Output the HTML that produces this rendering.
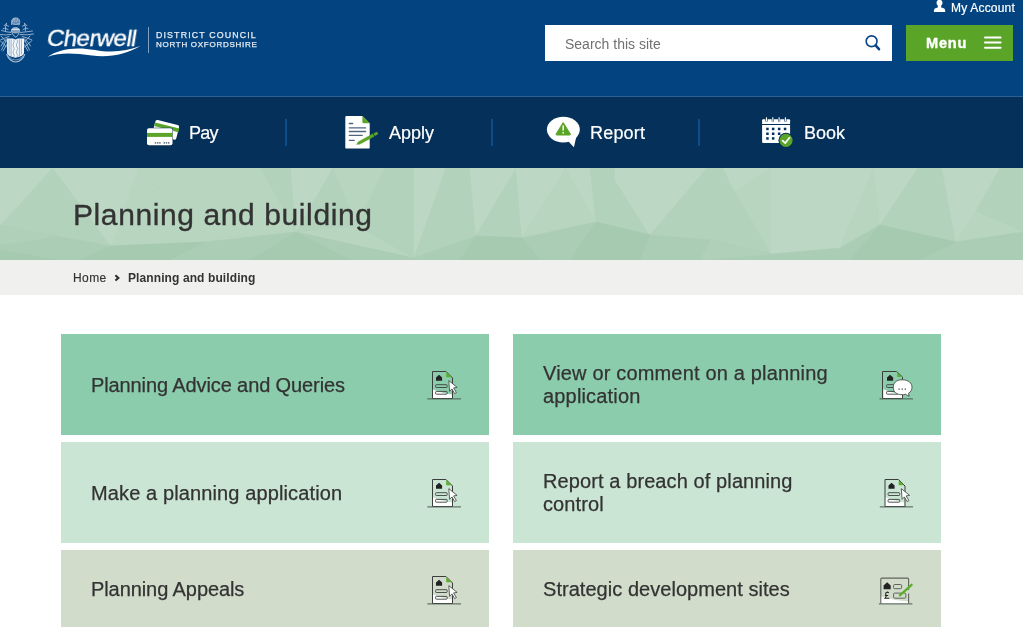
<!DOCTYPE html>
<html><head><meta charset="utf-8">
<style>
*{box-sizing:border-box;margin:0;padding:0}
html,body{width:1023px;height:635px;overflow:hidden;background:#fff;font-family:"Liberation Sans",sans-serif}
.a,.ct,.nt{will-change:transform}
.a{position:absolute;line-height:1;white-space:nowrap}
#hdr{position:absolute;left:0;top:0;width:1023px;height:97px;background:#03437f}
#hline{position:absolute;left:0;top:96px;width:1023px;height:1px;background:#2c5f92}
#nav{position:absolute;left:0;top:97px;width:1023px;height:71px;background:#04305a}
#hero{position:absolute;left:0;top:168px;width:1023px;height:92px;background:#b7d5bf;overflow:hidden}
#crumb{position:absolute;left:0;top:260px;width:1023px;height:35px;background:#f0f1ef}
.card{position:absolute;width:428px}
.c1{background:#8bccac}
.c2{background:#cbe5d5}
.c3{background:#d2dccb}
.ct{position:absolute;font-size:20px;line-height:23px;color:#333;white-space:nowrap;-webkit-text-stroke:0.25px #333}
.sep{position:absolute;top:119px;width:2px;height:27px;background:#0c4e8c}
.nt{position:absolute;font-size:18px;line-height:1;color:#fff;white-space:nowrap;-webkit-text-stroke:0.2px #fff}
</style></head><body>
<div id="hdr"></div>
<div id="hline"></div>
<div id="nav"></div>
<div id="hero"><svg style="position:absolute;left:0;top:0" width="1023" height="92" viewBox="0 0 1023 92"><polygon points="0,0 53,0 0,58" fill="#bcd8c4" stroke="#bcd8c4" stroke-width="0.5"/><polygon points="53,0 0,58 111,78" fill="#b2d2bb" stroke="#b2d2bb" stroke-width="0.5"/><polygon points="53,0 138,0 111,78" fill="#bcd8c4" stroke="#bcd8c4" stroke-width="0.5"/><polygon points="138,0 205,0 148,25" fill="#b7d5bf" stroke="#b7d5bf" stroke-width="0.5"/><polygon points="148,25 205,0 205,71 111,78" fill="#b7d5bf" stroke="#b7d5bf" stroke-width="0.5"/><polygon points="205,0 261,0 296,64 205,71" fill="#b7d5bf" stroke="#b7d5bf" stroke-width="0.5"/><polygon points="261,0 291,0 296,64" fill="#b2d2bb" stroke="#b2d2bb" stroke-width="0.5"/><polygon points="291,0 333,0 296,64" fill="#bcd8c4" stroke="#bcd8c4" stroke-width="0.5"/><polygon points="333,0 357,58 296,64" fill="#b2d2bb" stroke="#b2d2bb" stroke-width="0.5"/><polygon points="333,0 385,0 357,58" fill="#b7d5bf" stroke="#b7d5bf" stroke-width="0.5"/><polygon points="385,0 414,0 414,90 357,58" fill="#b2d2bb" stroke="#b2d2bb" stroke-width="0.5"/><polygon points="414,0 446,0 414,90" fill="#bcd8c4" stroke="#bcd8c4" stroke-width="0.5"/><polygon points="446,0 470,0 476,68 414,90" fill="#b2d2bb" stroke="#b2d2bb" stroke-width="0.5"/><polygon points="470,0 516,0 476,68" fill="#bcd8c4" stroke="#bcd8c4" stroke-width="0.5"/><polygon points="516,0 522,70 476,68" fill="#b2d2bb" stroke="#b2d2bb" stroke-width="0.5"/><polygon points="516,0 566,0 522,70" fill="#bcd8c4" stroke="#bcd8c4" stroke-width="0.5"/><polygon points="566,0 596,54 522,70" fill="#b7d5bf" stroke="#b7d5bf" stroke-width="0.5"/><polygon points="566,0 590,0 596,54" fill="#bcd8c4" stroke="#bcd8c4" stroke-width="0.5"/><polygon points="590,0 615,0 615,12 650,67 596,54" fill="#b2d2bb" stroke="#b2d2bb" stroke-width="0.5"/><polygon points="615,0 707,0 650,67 615,12" fill="#bcd8c4" stroke="#bcd8c4" stroke-width="0.5"/><polygon points="707,0 723,0 771,86 650,67" fill="#b2d2bb" stroke="#b2d2bb" stroke-width="0.5"/><polygon points="723,0 771,0 735,24" fill="#bcd8c4" stroke="#bcd8c4" stroke-width="0.5"/><polygon points="735,24 771,0 771,86" fill="#b7d5bf" stroke="#b7d5bf" stroke-width="0.5"/><polygon points="771,0 874,0 840,80 771,86" fill="#bcd8c4" stroke="#bcd8c4" stroke-width="0.5"/><polygon points="874,0 880,57 840,80" fill="#b7d5bf" stroke="#b7d5bf" stroke-width="0.5"/><polygon points="874,0 918,0 880,57" fill="#bcd8c4" stroke="#bcd8c4" stroke-width="0.5"/><polygon points="918,0 942,0 956,74 880,57" fill="#b2d2bb" stroke="#b2d2bb" stroke-width="0.5"/><polygon points="942,0 1000,0 976,43 956,74" fill="#bcd8c4" stroke="#bcd8c4" stroke-width="0.5"/><polygon points="1000,0 1023,0 1023,64 976,43" fill="#b2d2bb" stroke="#b2d2bb" stroke-width="0.5"/><polygon points="976,43 1023,64 956,74" fill="#b7d5bf" stroke="#b7d5bf" stroke-width="0.5"/><polygon points="0,58 111,78 205,74 296,64 414,90 476,68 522,70 596,54 650,67 711,72 771,86 840,80 880,57 956,74 1023,64 1023,92 0,92" fill="#accdb5" stroke="#accdb5" stroke-width="0.5"/><polygon points="0,58 60,68 0,77" fill="#b0d0b9" stroke="#b0d0b9" stroke-width="0.5"/><polygon points="111,78 205,74 170,92 80,92" fill="#a6cab0" stroke="#a6cab0" stroke-width="0.5"/><polygon points="296,64 250,92 350,92" fill="#a6cab0" stroke="#a6cab0" stroke-width="0.5"/><polygon points="476,68 522,70 540,92 460,92" fill="#a6cab0" stroke="#a6cab0" stroke-width="0.5"/><polygon points="596,54 650,67 640,92 570,92" fill="#a6cab0" stroke="#a6cab0" stroke-width="0.5"/><polygon points="880,57 956,74 920,92 850,92" fill="#a6cab0" stroke="#a6cab0" stroke-width="0.5"/><polygon points="711,72 771,86 700,92" fill="#b0d0b9" stroke="#b0d0b9" stroke-width="0.5"/><polygon points="0,82 60,92 0,92" fill="#a6cab0" stroke="#a6cab0" stroke-width="0.5"/></svg></div>
<div id="crumb"></div>

<!-- logo -->
<svg style="position:absolute;left:0;top:0" width="150" height="70" viewBox="0 0 150 70">
 <g fill="none" stroke="#b4c7dd" stroke-width="0.9" stroke-linecap="round" opacity="0.9">
  <!-- crest figure -->
  <path d="M11.5,24.5 Q11,20 13,18.5 Q15.5,17.3 18,18.3 Q20,19.5 19.8,22.5 L19,25" fill="#6f92bb"/>
  <path d="M12.5,22 L13.3,19 M14.6,21.5 L15,18.5 M16.8,21.5 L17.5,19 M13,24 Q15.5,25.5 18.5,23.8"/>
  <!-- helmet -->
  <path d="M11.3,31.5 Q11.5,27.5 15.5,27.5 Q19.7,27.5 19.7,31.5 Q18,33 15.5,33 Q13,33 11.3,31.5 Z" fill="#8eabcc"/>
  <path d="M12,29.3 H19" stroke="#f0f4f8" stroke-width="1.2"/>
  <path d="M12,33 Q13,36 15.5,37 M19,33 Q18,36 16,37.2" stroke="#c5d4e5"/>
  <!-- sprigs -->
  <path d="M5.5,31 Q5,27 6.5,23.3 M6.5,23.3 L4,25.8 M6.3,25.3 L8.6,26.2 M5.6,27.8 L3,28.8 M5.6,28.5 L8,29.5"/>
  <path d="M25.5,31 Q26,27 24.5,23.3 M24.5,23.3 L27,25.8 M24.7,25.3 L22.4,26.2 M25.4,27.8 L28,28.8 M25.4,28.5 L23,29.5"/>
  <!-- mantling left -->
  <path d="M11,32.5 Q6,32 1.5,30.5 M11,34.5 Q5,35.5 0.5,34.5 M9,36.5 Q4,38 0.5,40 M7,38.5 Q3,41 1,46 M1,36 L6.5,42 M0.5,41 L6.5,47 M6.5,40 L1.5,50 M6.8,44.5 L3,51"/>
  <!-- mantling right -->
  <path d="M20,32.5 Q26,32 32.5,31 M20,34.5 Q27,35.5 33.5,34 M22,36.5 Q28,38 32,40 M24,38.5 Q28,41 30.5,46 M30,36 L24.5,42 M31.5,41 L24.5,47 M24.5,40 L29.5,50 M24.2,44.5 L28,51"/>
  <!-- motto scroll -->
  <path d="M6.8,54.5 Q9.5,61.5 15.5,62 Q22,61.5 24.7,54.5" stroke-width="1.2"/>
  <path d="M8.5,56.5 Q15.5,64 22.8,56.5" stroke-width="0.7"/>
 </g>
 <path d="M7.1,38.6 H13 L15.4,39.6 L17.8,38.6 H24 V53 Q24,56 15.4,57.8 Q7.1,56 7.1,53 Z" fill="#f4f7fa"/>
 <g stroke="#7f9fc2" stroke-width="0.8" fill="none">
  <path d="M9.1,39.3 V54.5 M11.1,39.3 V56 M19.4,39.3 V56 M21.4,39.3 V54.5"/>
  <path d="M13.6,39.6 q1.3,1.8 0,3.6 q-1.3,1.8 0,3.6 q1.3,1.8 0,3.6 q-1.3,1.8 0,3.6 q1.1,1.4 0.2,3 M17,39.6 q1.3,1.8 0,3.6 q-1.3,1.8 0,3.6 q1.3,1.8 0,3.6 q-1.3,1.8 0,3.6 q1.1,1.4 0.2,3"/>
 </g>
 <path d="M47.8,56.8 C58,49.2 75,46.3 95,50 C112,53.3 127,51 140.3,46.1 C127,54 110,58 92,55.6 C75,53.3 60,52.2 47.8,56.8 Z" fill="#fff"/>
</svg>
<div class="a" style="left:46px;top:26px;font-size:24px;color:#fff;transform:skewX(-9deg) scaleY(0.95);transform-origin:0 20px;-webkit-text-stroke:0.35px #fff;letter-spacing:-0.55px">Cherwell</div>
<div style="position:absolute;left:148px;top:27px;width:1px;height:26px;background:#7f9fc0"></div>
<div class="a" style="left:156px;top:31.2px;font-size:8.8px;font-weight:400;letter-spacing:1.15px;color:#e6ecf3;-webkit-text-stroke:0.25px #e6ecf3">DISTRICT COUNCIL</div>
<div class="a" style="left:156px;top:40.8px;font-size:8px;font-weight:400;letter-spacing:0.72px;color:#e6ecf3;-webkit-text-stroke:0.25px #e6ecf3">NORTH OXFORDSHIRE</div>

<!-- my account -->
<svg style="position:absolute;left:932px;top:0" width="16" height="14" viewBox="0 0 16 14">
 <circle cx="7.5" cy="2.8" r="3" fill="#fff"/>
 <path d="M5.8,5 H9.2 V7.6 Q13.2,8.2 13.2,10.8 V11.9 H1.9 V10.8 Q1.9,8.2 5.8,7.6 Z" fill="#fff"/>
</svg>
<div class="a" style="left:951px;top:1.5px;font-size:12px;letter-spacing:0.2px;color:#fff;-webkit-text-stroke:0.2px #fff">My Account</div>

<!-- search -->
<div style="position:absolute;left:545px;top:25px;width:347px;height:36px;background:#fff"></div>
<div class="a" style="left:565px;top:37px;font-size:14px;color:#6f716e">Search this site</div>

<svg style="position:absolute;left:860px;top:30px" width="26" height="24" viewBox="0 0 26 24">
 <circle cx="11.6" cy="11.25" r="5.4" fill="none" stroke="#0a4587" stroke-width="1.6"/>
 <path d="M15.6,15.4 L19,19.2" stroke="#0a4587" stroke-width="2.6" stroke-linecap="round"/>
</svg>
<!-- menu -->
<div style="position:absolute;left:906px;top:25px;width:107px;height:36px;background:#5aa528"></div>
<div class="a" style="left:925.5px;top:35.6px;font-size:14.6px;font-weight:700;letter-spacing:0.75px;color:#fff;-webkit-text-stroke:0.35px #fff">Menu</div>

<svg style="position:absolute;left:980px;top:30px" width="26" height="24" viewBox="0 0 26 24">
 <path d="M5,7.4 H20.6 M5,12.5 H20.6 M5,17.7 H20.6" stroke="#fff" stroke-width="2" stroke-linecap="round"/>
</svg>
<!-- nav -->
<div class="nt" style="left:189px;top:124px;letter-spacing:-0.7px">Pay</div>
<div class="nt" style="left:388.5px;top:124px">Apply</div>
<div class="nt" style="left:589.5px;top:124px;letter-spacing:0.2px">Report</div>
<div class="nt" style="left:803.5px;top:124px">Book</div>
<!-- pay icon -->
<svg style="position:absolute;left:140px;top:112px" width="45" height="40" viewBox="140 112 45 40">
 <g transform="translate(155.8,119.5) rotate(14.4)">
  <rect x="0" y="0" width="24.5" height="15" rx="2" fill="#fff"/>
  <rect x="0" y="3" width="25" height="3.8" fill="#5aa528"/>
 </g>
 <rect x="146.5" y="127.8" width="26.5" height="18" rx="2.2" fill="#04305a"/>
 <rect x="147" y="128.3" width="25.5" height="17" rx="2" fill="#fff"/>
 <rect x="147" y="132.9" width="25.5" height="4" fill="#5aa528"/>
 <g fill="#6b7b8c">
  <rect x="154.8" y="142" width="1.4" height="1.7"/><rect x="157" y="142" width="1.4" height="1.7"/><rect x="159.2" y="142" width="1.4" height="1.7"/>
  <rect x="163.6" y="142" width="1.4" height="1.7"/><rect x="165.8" y="142" width="1.4" height="1.7"/><rect x="168" y="142" width="1.4" height="1.7"/>
 </g>
</svg>
<!-- apply icon -->
<svg style="position:absolute;left:340px;top:112px" width="42" height="40" viewBox="340 112 42 40">
 <path d="M346.5,115.9 H362.4 L369.7,123.3 V147.4 Q369.7,148.6 368.5,148.6 H346.5 Q345.3,148.6 345.3,147.4 V117.1 Q345.3,115.9 346.5,115.9 Z" fill="#fff"/>
 <path d="M362.4,115.9 L369.7,123.3 H363.6 Q362.4,123.3 362.4,122.1 Z" fill="#5aa528"/>
 <g stroke="#4f6580" stroke-width="1.3" stroke-linecap="round">
  <path d="M349.3,123.5 H352.7 M349.3,127.9 H365.6 M349.3,131.5 H365.6 M349.3,135.3 H362.2 M349.3,140.3 H354.3"/>
 </g>
 <path d="M356.4,144.4 L358.3,141.65 L372.8,133.8 L374.2,136.4 L359.75,144.29 Z" fill="#5aa528" stroke="#5aa528" stroke-width="0.3" stroke-linejoin="round"/>
 <path d="M373.5,133.4 L376.1,132 Q377.1,131.6 377.6,132.5 L377.9,133.2 Q378.1,134 377.5,134.6 L374.9,136 Z" fill="#5aa528"/>
</svg>
<!-- report icon -->
<svg style="position:absolute;left:543px;top:112px" width="42" height="40" viewBox="543 112 42 40">
 <ellipse cx="563.35" cy="129.6" rx="16.45" ry="12.9" fill="#fff"/>
 <path d="M567.5,140.5 L573.9,147.3 L576.5,136 Z" fill="#fff"/>
 <path d="M563.2,122.6 L570.2,133.8 Q570.8,135 569.5,135 H556.9 Q555.6,135 556.2,133.8 Z" fill="#5aa528" stroke="#5aa528" stroke-width="1" stroke-linejoin="round"/>
 <path d="M563.2,125.6 V130.6" stroke="#fff" stroke-width="1.5"/>
 <rect x="562.45" y="132" width="1.5" height="1.5" fill="#fff"/>
</svg>
<!-- book icon -->
<svg style="position:absolute;left:758px;top:112px" width="42" height="40" viewBox="758 112 42 40">
 <path d="M763.1,119.2 H789.1 Q790.1,119.2 790.1,120.2 V124 H762.1 V120.2 Q762.1,119.2 763.1,119.2 Z" fill="#fff"/>
 <path d="M762.1,124.9 H790.1 V141.9 Q790.1,142.9 789.1,142.9 H763.1 Q762.1,142.9 762.1,141.9 Z" fill="#fff"/>
 <g stroke="#04305a" stroke-width="2.2"><path d="M766.5,117 V121.6 M772.8,117 V121.6 M779.1,117 V121.6 M785.4,117 V121.6"/></g>
 <g stroke="#fff" stroke-width="1.1"><path d="M766.5,117.2 V121.2 M772.8,117.2 V121.2 M779.1,117.2 V121.2 M785.4,117.2 V121.2"/></g>
 <g fill="#04305a">
  <rect x="766.2" y="127.7" width="2.5" height="2.5"/><rect x="771.9" y="127.7" width="2.5" height="2.5"/><rect x="777.9" y="127.7" width="2.5" height="2.5"/><rect x="783.8" y="127.7" width="2.5" height="2.5"/>
  <rect x="766.2" y="132.5" width="2.5" height="2.5"/><rect x="771.9" y="132.5" width="2.5" height="2.5"/><rect x="777.9" y="132.5" width="2.5" height="2.5"/>
  <rect x="766.2" y="137.2" width="2.5" height="2.5"/><rect x="771.9" y="137.2" width="2.5" height="2.5"/>
 </g>
 <circle cx="786" cy="140.3" r="7.6" fill="#04305a"/>
 <circle cx="786" cy="140.3" r="6.6" fill="#5aa528"/>
 <path d="M782.6,140.6 L785.3,143.1 L789.6,137.6" fill="none" stroke="#fff" stroke-width="1.7" stroke-linecap="round" stroke-linejoin="round"/>
</svg>
<div class="sep" style="left:285px"></div>
<div class="sep" style="left:491px"></div>
<div class="sep" style="left:698px"></div>

<!-- title -->
<div class="a" style="left:73px;top:199.6px;font-size:30px;letter-spacing:0.6px;color:#333;-webkit-text-stroke:0.35px #333">Planning and building</div>
<div class="a" style="left:73px;top:271.5px;font-size:12px;letter-spacing:0.4px;color:#333;-webkit-text-stroke:0.15px #333">Home</div>
<div class="a" style="left:128px;top:271.5px;font-size:12px;font-weight:700;letter-spacing:0.1px;color:#333">Planning and building</div>

<svg style="position:absolute;left:110px;top:270px" width="14" height="16" viewBox="110 270 14 16"><path d="M115.4,275.3 L118.4,277.9 L115.4,280.5" fill="none" stroke="#2b2b2b" stroke-width="2"/></svg>
<!-- cards -->
<div class="card c1" style="left:61px;top:334px;height:101px"></div>
<div class="card c1" style="left:513px;top:334px;height:101px"></div>
<div class="card c2" style="left:61px;top:442px;height:101px"></div>
<div class="card c2" style="left:513px;top:442px;height:101px"></div>
<div class="card c3" style="left:61px;top:550px;height:77px"></div>
<div class="card c3" style="left:513px;top:550px;height:77px"></div>


<svg style="position:absolute;left:427px;top:370px" width="35" height="31" viewBox="0 0 35 31">
   <path d="M5.4,19.2 Q13,22.5 25,24.4 V28.5 H5.4 Z" fill="#fff"/>
   <path d="M5.5,1.5 H19 L25.5,8 V28.5 H5.5 Z" fill="none" stroke="#3b3f3c" stroke-width="1"/>
   <path d="M19.2,2.2 L24.6,7.3 H19.2 Z" fill="#5bb02c"/>
   <path d="M9,7.6 L12.05,4.8 L15.1,7.6 V10.7 H9 Z" fill="#222"/>
   <rect x="8.6" y="14.7" width="11.6" height="2.8" rx="0.8" fill="none" stroke="#3b3f3c" stroke-width="0.9"/>
   <rect x="8.6" y="21.4" width="11.6" height="2.8" rx="0.8" fill="none" stroke="#3b3f3c" stroke-width="0.9"/>
   <path d="M0.3,28.9 H34" stroke="#4d5a52" stroke-width="1"/>
  
   <path d="M21.8,10.6 L30.1,17.4 L26.6,17.9 L29.4,22.6 L27.6,23.6 L24.9,18.9 L22.6,21.3 Z" fill="#fff" stroke="#3b3f3c" stroke-width="0.8" stroke-linejoin="round"/>
  </svg>
<svg style="position:absolute;left:427px;top:478px" width="35" height="31" viewBox="0 0 35 31">
   <path d="M5.4,19.2 Q13,22.5 25,24.4 V28.5 H5.4 Z" fill="#fff"/>
   <path d="M5.5,1.5 H19 L25.5,8 V28.5 H5.5 Z" fill="none" stroke="#3b3f3c" stroke-width="1"/>
   <path d="M19.2,2.2 L24.6,7.3 H19.2 Z" fill="#5bb02c"/>
   <path d="M9,7.6 L12.05,4.8 L15.1,7.6 V10.7 H9 Z" fill="#222"/>
   <rect x="8.6" y="14.7" width="11.6" height="2.8" rx="0.8" fill="none" stroke="#3b3f3c" stroke-width="0.9"/>
   <rect x="8.6" y="21.4" width="11.6" height="2.8" rx="0.8" fill="none" stroke="#3b3f3c" stroke-width="0.9"/>
   <path d="M0.3,28.9 H34" stroke="#4d5a52" stroke-width="1"/>
  
   <path d="M21.8,10.6 L30.1,17.4 L26.6,17.9 L29.4,22.6 L27.6,23.6 L24.9,18.9 L22.6,21.3 Z" fill="#fff" stroke="#3b3f3c" stroke-width="0.8" stroke-linejoin="round"/>
  </svg>
<svg style="position:absolute;left:427px;top:575px" width="35" height="31" viewBox="0 0 35 31">
   <path d="M5.4,19.2 Q13,22.5 25,24.4 V28.5 H5.4 Z" fill="#fff"/>
   <path d="M5.5,1.5 H19 L25.5,8 V28.5 H5.5 Z" fill="none" stroke="#3b3f3c" stroke-width="1"/>
   <path d="M19.2,2.2 L24.6,7.3 H19.2 Z" fill="#5bb02c"/>
   <path d="M9,7.6 L12.05,4.8 L15.1,7.6 V10.7 H9 Z" fill="#222"/>
   <rect x="8.6" y="14.7" width="11.6" height="2.8" rx="0.8" fill="none" stroke="#3b3f3c" stroke-width="0.9"/>
   <rect x="8.6" y="21.4" width="11.6" height="2.8" rx="0.8" fill="none" stroke="#3b3f3c" stroke-width="0.9"/>
   <path d="M0.3,28.9 H34" stroke="#4d5a52" stroke-width="1"/>
  
   <path d="M21.8,10.6 L30.1,17.4 L26.6,17.9 L29.4,22.6 L27.6,23.6 L24.9,18.9 L22.6,21.3 Z" fill="#fff" stroke="#3b3f3c" stroke-width="0.8" stroke-linejoin="round"/>
  </svg>
<svg style="position:absolute;left:878px;top:478px" width="35" height="31" viewBox="0 0 35 31"><g transform="translate(1.5,0)">
   <path d="M5.4,19.2 Q13,22.5 25,24.4 V28.5 H5.4 Z" fill="#fff"/>
   <path d="M5.5,1.5 H19 L25.5,8 V28.5 H5.5 Z" fill="none" stroke="#3b3f3c" stroke-width="1"/>
   <path d="M19.2,2.2 L24.6,7.3 H19.2 Z" fill="#5bb02c"/>
   <path d="M9,7.6 L12.05,4.8 L15.1,7.6 V10.7 H9 Z" fill="#222"/>
   <rect x="8.6" y="14.7" width="11.6" height="2.8" rx="0.8" fill="none" stroke="#3b3f3c" stroke-width="0.9"/>
   <rect x="8.6" y="21.4" width="11.6" height="2.8" rx="0.8" fill="none" stroke="#3b3f3c" stroke-width="0.9"/>
   <path d="M0.3,28.9 H34" stroke="#4d5a52" stroke-width="1"/>
  
   <path d="M21.8,10.6 L30.1,17.4 L26.6,17.9 L29.4,22.6 L27.6,23.6 L24.9,18.9 L22.6,21.3 Z" fill="#fff" stroke="#3b3f3c" stroke-width="0.8" stroke-linejoin="round"/>
  </g></svg>
<!-- dialog icon -->
<svg style="position:absolute;left:878px;top:370px" width="36" height="31" viewBox="0 0 36 31">
 <path d="M5.4,19.2 Q13,22.5 25,24.4 V28.5 H5.4 Z" fill="#fff"/>
 <path d="M24.5,7.2 V28.5 H4.5 V1.5 H18.5 L24.5,7" fill="none" stroke="#3b3f3c" stroke-width="1"/>
 <path d="M19.2,2.2 L24.1,6.9 H19.2 Z" fill="#5bb02c"/>
 <path d="M9,7.6 L12.05,4.8 L15.1,7.6 V10.7 H9 Z" fill="#222"/>
 <rect x="8.6" y="14.7" width="11.6" height="2.8" rx="0.8" fill="none" stroke="#3b3f3c" stroke-width="0.9"/>
 <rect x="8.6" y="21.4" width="11.6" height="2.8" rx="0.8" fill="none" stroke="#3b3f3c" stroke-width="0.9"/>
 <path d="M1.5,28.9 H35" stroke="#4d5a52" stroke-width="1"/>
 <path d="M24.2,9.8 C30.5,9.8 34,13 34,17.3 C34,20 32.6,22 30.5,23.2 L31.2,26.2 L27.4,24.3 C26.4,24.6 25.3,24.7 24.2,24.7 C18,24.7 15.3,21.5 15.3,17.3 C15.3,13 18,9.8 24.2,9.8 Z" fill="#fff" stroke="#3b3f3c" stroke-width="0.8"/>
 <g fill="#555"><rect x="20.5" y="18.5" width="1.3" height="1.3"/><rect x="23.6" y="18.5" width="1.3" height="1.3"/><rect x="26.7" y="18.5" width="1.3" height="1.3"/></g>
</svg>
<!-- form/pencil icon -->
<svg style="position:absolute;left:878px;top:575px" width="36" height="31" viewBox="0 0 36 31">
 <path d="M2.8,21.6 Q16,25.5 30.3,26.6 V28.5 H2.8 Z" fill="#fff"/>
 <path d="M2.8,28.5 V4.1 Q2.8,3.1 3.8,3.1 H29.6 Q30.6,3.1 30.6,4.1 V15" fill="none" stroke="#5f635f" stroke-width="1.1"/>
 <path d="M30.6,18.6 V28.5" fill="none" stroke="#5f635f" stroke-width="1.1"/>
 <path d="M5.6,10.6 L9.15,7.2 L12.7,10.6 V14.3 H5.6 Z" fill="#222"/>
 <path d="M10.8,17.9 Q9.9,17 8.8,17.2 Q7.5,17.5 7.7,19.2 L8.1,20.6 Q8.3,22.2 7,23.3 H11.3 M6.9,20.5 H10.2" fill="none" stroke="#222" stroke-width="1.1"/>
 <rect x="15.6" y="9.5" width="8" height="4.2" rx="1" fill="none" stroke="#5f635f" stroke-width="1"/>
 <rect x="15.6" y="18.1" width="12.2" height="5.1" rx="1" fill="none" stroke="#5f635f" stroke-width="1"/>
 <path d="M21.9,20.3 L33.6,9.8" stroke="#5bb02c" stroke-width="2.3" stroke-linecap="round"/>
 <path d="M0.9,28.9 H34.4" stroke="#4d5a52" stroke-width="1"/>
</svg>
<div class="ct" style="left:91px;top:374px;letter-spacing:-0.11px">Planning Advice and Queries</div>
<div class="ct" style="left:543px;top:362px;letter-spacing:0.17px">View or comment on a planning<br>application</div>
<div class="ct" style="left:91px;top:482px;letter-spacing:0.12px">Make a planning application</div>
<div class="ct" style="left:543px;top:470px;letter-spacing:0.1px">Report a breach of planning<br>control</div>
<div class="ct" style="left:91px;top:578px;letter-spacing:-0.08px">Planning Appeals</div>
<div class="ct" style="left:543px;top:578px;letter-spacing:0.04px">Strategic development sites</div>

</body></html>
